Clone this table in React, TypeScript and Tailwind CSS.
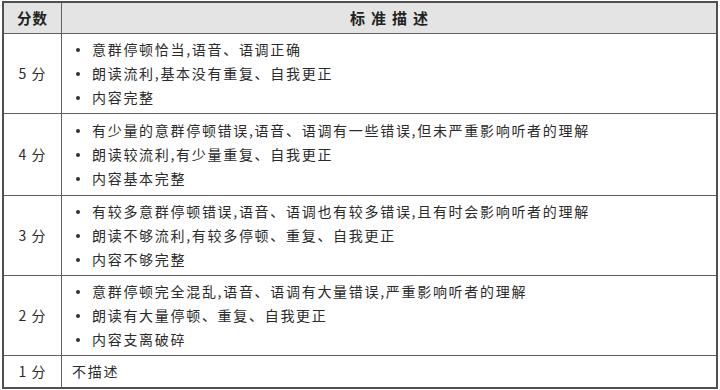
import React from "react";

const rows: { score: string; items: string[]; h: string }[] = [
  {
    score: "5 分",
    h: "h-[80px]",
    items: ["意群停顿恰当,语音、语调正确", "朗读流利,基本没有重复、自我更正", "内容完整"],
  },
  {
    score: "4 分",
    h: "h-[82px]",
    items: [
      "有少量的意群停顿错误,语音、语调有一些错误,但未严重影响听者的理解",
      "朗读较流利,有少量重复、自我更正",
      "内容基本完整",
    ],
  },
  {
    score: "3 分",
    h: "h-[80px]",
    items: [
      "有较多意群停顿错误,语音、语调也有较多错误,且有时会影响听者的理解",
      "朗读不够流利,有较多停顿、重复、自我更正",
      "内容不够完整",
    ],
  },
  {
    score: "2 分",
    h: "h-[80px]",
    items: [
      "意群停顿完全混乱,语音、语调有大量错误,严重影响听者的理解",
      "朗读有大量停顿、重复、自我更正",
      "内容支离破碎",
    ],
  },
];

export default function App() {
  return (
    <div
      className="w-[720px] h-[390px] bg-white pt-[1px] pl-[2px]"
      style={{ fontFamily: '"Noto Sans CJK SC", "Noto Sans", sans-serif' }}
    >
      <div className="w-[716px] border-2 border-[#505050] text-[#2b2b2b]">
        <div className="flex h-[31px] bg-[#e4e4e4] border-b border-[#606060]">
          <div className="w-[58px] border-r-[1.5px] border-[#606060] flex items-center justify-center text-[14.5px] font-bold tracking-[1px] text-[#222]">
            分数
          </div>
          <div className="flex-1 flex items-center justify-center text-[15px] font-bold tracking-[6px] text-[#222] pl-[6px]">
            标准描述
          </div>
        </div>
        {rows.map((r) => (
          <div key={r.score} className={`flex ${r.h} border-b border-[#606060]`}>
            <div className="w-[58px] border-r-[1.5px] border-[#606060] flex items-center justify-center text-[14px] tracking-[1px]">
              {r.score}
            </div>
            <div className="flex-1 flex flex-col justify-center pl-[14px]">
              {r.items.map((t) => (
                <div key={t} className="flex items-center h-[24px]">
                  <span className="w-[16px] flex items-center">
                    <span className="block w-[4px] h-[4px] rounded-full bg-[#333]" />
                  </span>
                  <span className="text-[14px] tracking-[1.7px] whitespace-nowrap">{t}</span>
                </div>
              ))}
            </div>
          </div>
        ))}
        <div className="flex h-[31px]">
          <div className="w-[58px] border-r-[1.5px] border-[#606060] flex items-center justify-center text-[14px] tracking-[1px]">
            1 分
          </div>
          <div className="flex-1 flex items-center pl-[10px] text-[14px] tracking-[1.7px]">不描述</div>
        </div>
      </div>
    </div>
  );
}
